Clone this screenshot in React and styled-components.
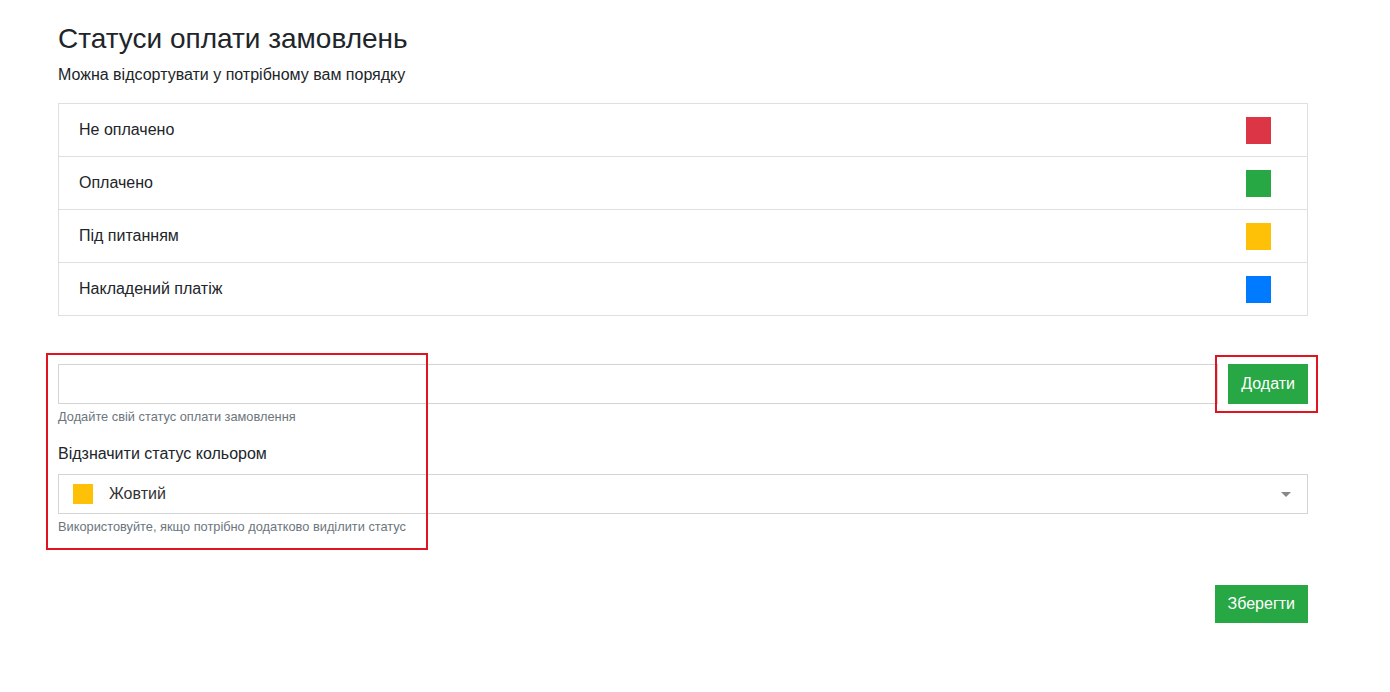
import React from "react";
import styled, { createGlobalStyle } from "styled-components";

const Global = createGlobalStyle`
  html, body { margin: 0; padding: 0; background: #fff; }
  body {
    font-family: "Liberation Sans", Arial, sans-serif;
    color: #212529;
    font-size: 16px;
  }
`;

const Page = styled.div`
  position: relative;
  width: 1250px;
  padding: 22px 0 60px 58px;
`;

const Title = styled.h3`
  margin: 0;
  font-size: 28px;
  font-weight: 400;
  line-height: 34px;
`;

const Subtitle = styled.p`
  margin: 7px 0 0;
  font-size: 16px;
  line-height: 24px;
`;

const StatusList = styled.ul`
  list-style: none;
  margin: 16px 0 0;
  padding: 0;
  border: 1px solid #dfdfdf;
`;

const StatusRow = styled.li`
  display: flex;
  align-items: center;
  justify-content: space-between;
  height: 52px;
  padding: 0 36px 0 20px;
  font-size: 16px;
  & + & { border-top: 1px solid #dfdfdf; }
`;

const Swatch = styled.span`
  display: block;
  width: ${(p) => p.w}px;
  height: ${(p) => p.h}px;
  background: ${(p) => p.color};
  flex: none;
`;

const Form = styled.div`
  margin-top: 48px;
  display: flex;
  flex-direction: column;
`;

const InputRow = styled.div`
  display: flex;
  gap: 10px;
`;

const TextInput = styled.input`
  flex: 1;
  height: 40px;
  box-sizing: border-box;
  border: 1px solid #d4d4d4;
  border-radius: 0;
  padding: 0 12px;
  font: inherit;
  outline: none;
`;

const Button = styled.button`
  height: ${(p) => p.h}px;
  padding: 0 ${(p) => p.px}px;
  background: #28a745;
  color: #fff;
  border: none;
  border-radius: 0;
  font-family: inherit;
  font-size: 16px;
  cursor: pointer;
`;

const Help = styled.small`
  display: block;
  margin-top: ${(p) => p.mt}px;
  font-size: 12.8px;
  line-height: 16px;
  color: #6c757d;
`;

const Label = styled.label`
  display: block;
  margin-top: 17px;
  font-size: 16px;
  line-height: 24px;
`;

const Select = styled.div`
  margin-top: 8px;
  height: 40px;
  box-sizing: border-box;
  border: 1px solid #d4d4d4;
  display: flex;
  align-items: center;
  padding: 0 16px 0 14px;
  gap: 16px;
  font-size: 16px;
  color: #333;
`;

const SelectValue = styled.span`
  flex: 1;
`;

const Caret = styled.span`
  width: 0;
  height: 0;
  border-left: 5px solid transparent;
  border-right: 5px solid transparent;
  border-top: 5px solid #888;
`;

const Footer = styled.div`
  display: flex;
  justify-content: flex-end;
  margin-top: 50px;
`;

const Highlight = styled.div`
  position: absolute;
  left: ${(p) => p.x}px;
  top: ${(p) => p.y}px;
  width: ${(p) => p.w}px;
  height: ${(p) => p.h}px;
  box-sizing: border-box;
  border: 2px solid #e0141e;
  pointer-events: none;
`;

const statuses = [
  { name: "Не оплачено", color: "#dc3545" },
  { name: "Оплачено", color: "#28a745" },
  { name: "Під питанням", color: "#ffc107" },
  { name: "Накладений платіж", color: "#007bff" },
];

export default function App() {
  return (
    <>
      <Global />
      <Page>
        <Title>Статуси оплати замовлень</Title>
        <Subtitle>Можна відсортувати у потрібному вам порядку</Subtitle>
        <StatusList>
          {statuses.map((s) => (
            <StatusRow key={s.name}>
              {s.name}
              <Swatch w={25} h={27} color={s.color} />
            </StatusRow>
          ))}
        </StatusList>

        <Form>
          <InputRow>
            <TextInput />
            <Button h={40} px={13}>Додати</Button>
          </InputRow>
          <Help mt={5}>Додайте свій статус оплати замовлення</Help>
          <Label>Відзначити статус кольором</Label>
          <Select>
            <Swatch w={20} h={20} color="#ffc107" />
            <SelectValue>Жовтий</SelectValue>
            <Caret />
          </Select>
          <Help mt={5}>Використовуйте, якщо потрібно додатково виділити статус</Help>
        </Form>

        <Footer>
          <Button h={38} px={13}>Зберегти</Button>
        </Footer>

        <Highlight x={46} y={353} w={382} h={197} />
        <Highlight x={1215} y={355} w={103} h={58} />
      </Page>
    </>
  );
}
